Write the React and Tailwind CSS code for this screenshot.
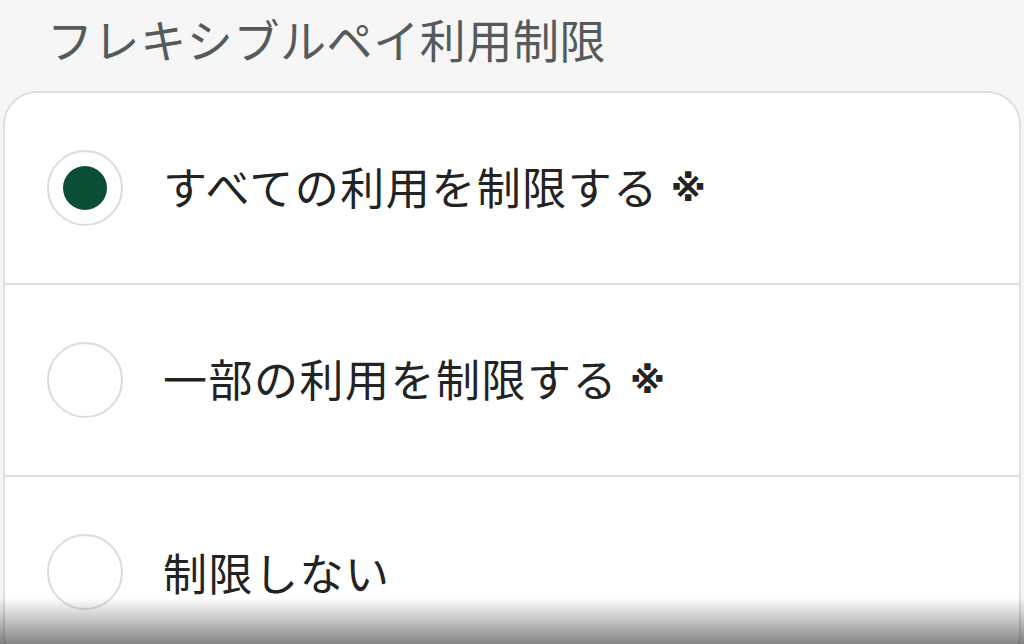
import React, { useState } from 'react';

const options = [
  { id: 'all', label: 'すべての利用を制限する', note: true },
  { id: 'part', label: '一部の利用を制限する', note: true },
  { id: 'none', label: '制限しない', note: false },
];

const Radio = ({ checked }) => (
  <span className="flex items-center justify-center w-[76px] h-[76px] rounded-full border-2 border-[#dcdcdc] bg-white shrink-0">
    {checked && <span className="w-[44px] h-[44px] rounded-full bg-[#0c4d35]" />}
  </span>
);

const App = () => {
  const [selected, setSelected] = useState('all');

  return (
    <div
      className="relative h-[644px] overflow-hidden bg-[#f6f6f6]"
      style={{ fontFamily: '"Noto Sans CJK JP", "Noto Sans", sans-serif' }}
    >
      {/* Title */}
      <h1 className="pl-[47px] pt-[7px] h-[91px] text-[46px] leading-[62px] text-[#555a5a] tracking-[0.6px]">
        フレキシブルペイ利用制限
      </h1>

      {/* Options card */}
      <div className="mx-[3px] bg-white border-2 border-[#dedede] rounded-[34px] overflow-hidden">
        {options.map((opt, i) => (
          <button
            key={opt.id}
            onClick={() => setSelected(opt.id)}
            className={`flex items-center w-full pl-[42px] text-left ${i > 0 ? 'h-[192px] border-t-2 border-[#e0e0e0]' : 'h-[190px]'}`}
          >
            <Radio checked={selected === opt.id} />
            <span className="ml-[40px] text-[44px] leading-none text-[#232323] tracking-[1.5px]">
              {opt.label}
              <span className={opt.note ? 'ml-[12px] text-[36px] font-bold align-middle relative -top-[5px] [font-family:"DejaVu_Sans",sans-serif]' : 'hidden'}>※</span>
            </span>
          </button>
        ))}
      </div>

      {/* bottom shade */}
      <div className="pointer-events-none absolute left-0 right-0 bottom-0 h-[46px] bg-gradient-to-b from-[rgba(0,0,0,0)] to-[rgba(0,0,0,0.48)]" />
    </div>
  );
};

export default App;
